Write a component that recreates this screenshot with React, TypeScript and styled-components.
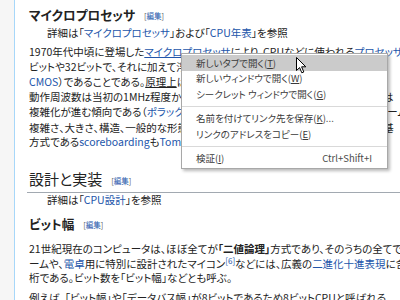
import styled, {createGlobalStyle} from "styled-components";

const GlobalStyle = createGlobalStyle`
  html, body {
    margin: 0;
    padding: 0;
    background: #ffffff;
    overflow: hidden;
  }
  body {
    font-family: "Noto Sans CJK JP", "Noto Sans", sans-serif;
    color: #222222;
  }
`;

const Page = styled.div`
  display: flex;
  width: 400px;
  height: 300px;
  overflow: hidden;
  position: relative;
  font-feature-settings: "palt";
`;

const Sidebar = styled.div`
  width: 14px;
  flex-shrink: 0;
  background: #f6f6f6;
  border-right: 1px solid #a7d7f9;
`;

const Content = styled.div`
  flex: 1;
  padding: 6px 0 0 14px;
  white-space: nowrap;
  overflow: hidden;
  font-size: 10.5px;
`;

const SectionTitle = styled.div<{ $top?: number }>`
  font-size: 12.6px;
  font-weight: bold;
  line-height: 18px;
  margin-top: ${props => props.$top || 0}px;
`;

const MainTitle = styled.div`
  font-size: 15px;
  line-height: 22px;
  margin-top: 18px;
  border-bottom: 1px solid #a2a9b1;
  margin-left: -2px;
  padding-left: 2px;
`;

const EditLink = styled.span`
  font-size: 7.5px;
  font-weight: normal;
  color: #54595d;
  margin-left: 9px;
  vertical-align: 1px;

  a {
    color: #2255aa;
    text-decoration: none;
  }
`;

const Hatnote = styled.div<{ $top?: number }>`
  padding-left: 18px;
  line-height: 14.5px;
  margin-top: ${props => props.$top || 0}px;
`;

const Para = styled.div<{ $top: number; $lh?: number }>`
  line-height: ${props => props.$lh || 14.5}px;
  margin-top: ${props => props.$top}px;
`;

const Link = styled.a<{ $hover?: boolean }>`
  color: #2255aa;
  text-decoration: ${props => props.$hover ? "underline" : "none"};
`;

const Under = styled.span`
  text-decoration: underline;
`;

const Ref = styled.sup`
  font-size: 8px;
  line-height: 0;
  color: #2255aa;
`;

const Menu = styled.div`
  position: absolute;
  left: 181px;
  top: 53px;
  width: 205px;
  padding: 1px 0 2px;
  background: #ffffff;
  border: 1px solid #a8a8a8;
  box-shadow: 2px 2px 3px rgba(0, 0, 0, 0.28);
  font-size: 9.5px;
  color: #3a3a3a;
  white-space: nowrap;
`;

const MenuItem = styled.div<{ $active?: boolean }>`
  display: flex;
  justify-content: space-between;
  align-items: center;
  height: 15.5px;
  padding: 0 15px 0 14px;
  background: ${props => props.$active ? "#cbcbcb" : "transparent"};
`;

const Shortcut = styled.span`
  color: #4a4a4a;
`;

const Separator = styled.div`
  height: 1px;
  background: #d9d9d9;
  margin: 4px 0 4px 0;
`;

const Cursor = styled.svg`
  position: absolute;
  left: 296px;
  top: 57px;
`;

function Edit() {
    return <EditLink>[<a>編集</a>]</EditLink>;
}

export default function App() {
    return (
        <>
            <GlobalStyle/>
            <Page>
                <Sidebar/>
                <Content>
                    <SectionTitle>マイクロプロセッサ<Edit/></SectionTitle>
                    <Hatnote $top={1}>詳細は「<Link>マイクロプロセッサ</Link>」および「<Link>CPU年表</Link>」を参照</Hatnote>
                    <Para $top={3} $lh={15}>
                        1970年代中頃に登場した<Link $hover>マイクロプロセッサ</Link>により、CPUなどに使われる<Link>プロセッサ</Link>に<br/>
                        ビットや32ビットで、それに加えて浮動小数点演算や複雑な命令を操<br/>
                        <Link>CMOS</Link>）であることである。<Under>原理上</Under>は同じ構造であっても、動作にかか<br/>
                        動作周波数は当初の1MHz程度から、現在では数GHzにまで向上し、内部構造とは<br/>
                        複雑化が進む傾向である（<Link>ポラックの法則</Link>）。最近では<Link>マルチコア</Link>化やプラットフォーム
                    </Para>
                    <Para $top={2}>
                        複雑さ、大きさ、構造、一般的な形態は大きく変わったが、基本的な設計と機能の基<br/>
                        方式である<Link>scoreboarding</Link>も<Link>Tomasuloのアルゴリズム</Link>も1960年
                    </Para>
                    <MainTitle>設計と実装<Edit/></MainTitle>
                    <Hatnote>詳細は「<Link>CPU設計</Link>」を参照</Hatnote>
                    <SectionTitle $top={8}>ビット幅<Edit/></SectionTitle>
                    <Para $top={8}>
                        21世紀現在のコンピュータは、ほぼ全てが<b>「二値論理」</b>方式であり、そのうちの全てで<br/>
                        ームや、<Link>電卓</Link>用に特別に設計されたマイコン<Ref>[6]</Ref>などには、広義の<Link>二進化十進表現</Link>に含ま<br/>
                        桁である。ビット数を「ビット幅」などとも呼ぶ。
                    </Para>
                    <Para $top={5}>
                        例えば、「ビット幅」や「データバス幅」が8ビットであるため8ビットCPUと呼ばれる
                    </Para>
                </Content>
                <Menu>
                    <MenuItem $active><span>新しいタブで開く(<u>T</u>)</span></MenuItem>
                    <MenuItem><span>新しいウィンドウで開く(<u>W</u>)</span></MenuItem>
                    <MenuItem><span>シークレット ウィンドウで開く(<u>G</u>)</span></MenuItem>
                    <Separator/>
                    <MenuItem><span>名前を付けてリンク先を保存(<u>K</u>)...</span></MenuItem>
                    <MenuItem><span>リンクのアドレスをコピー(<u>E</u>)</span></MenuItem>
                    <Separator/>
                    <MenuItem><span>検証(<u>I</u>)</span><Shortcut>Ctrl+Shift+I</Shortcut></MenuItem>
                </Menu>
                <Cursor width="11" height="17" viewBox="0 0 11 17">
                    <path d="M0.5 0.5 L0.5 13.5 L3.6 10.6 L5.8 15.8 L7.8 15 L5.6 9.8 L9.8 9.8 Z"
                          fill="#ffffff" stroke="#000000" strokeWidth="1" strokeLinejoin="round"/>
                </Cursor>
            </Page>
        </>
    );
}
